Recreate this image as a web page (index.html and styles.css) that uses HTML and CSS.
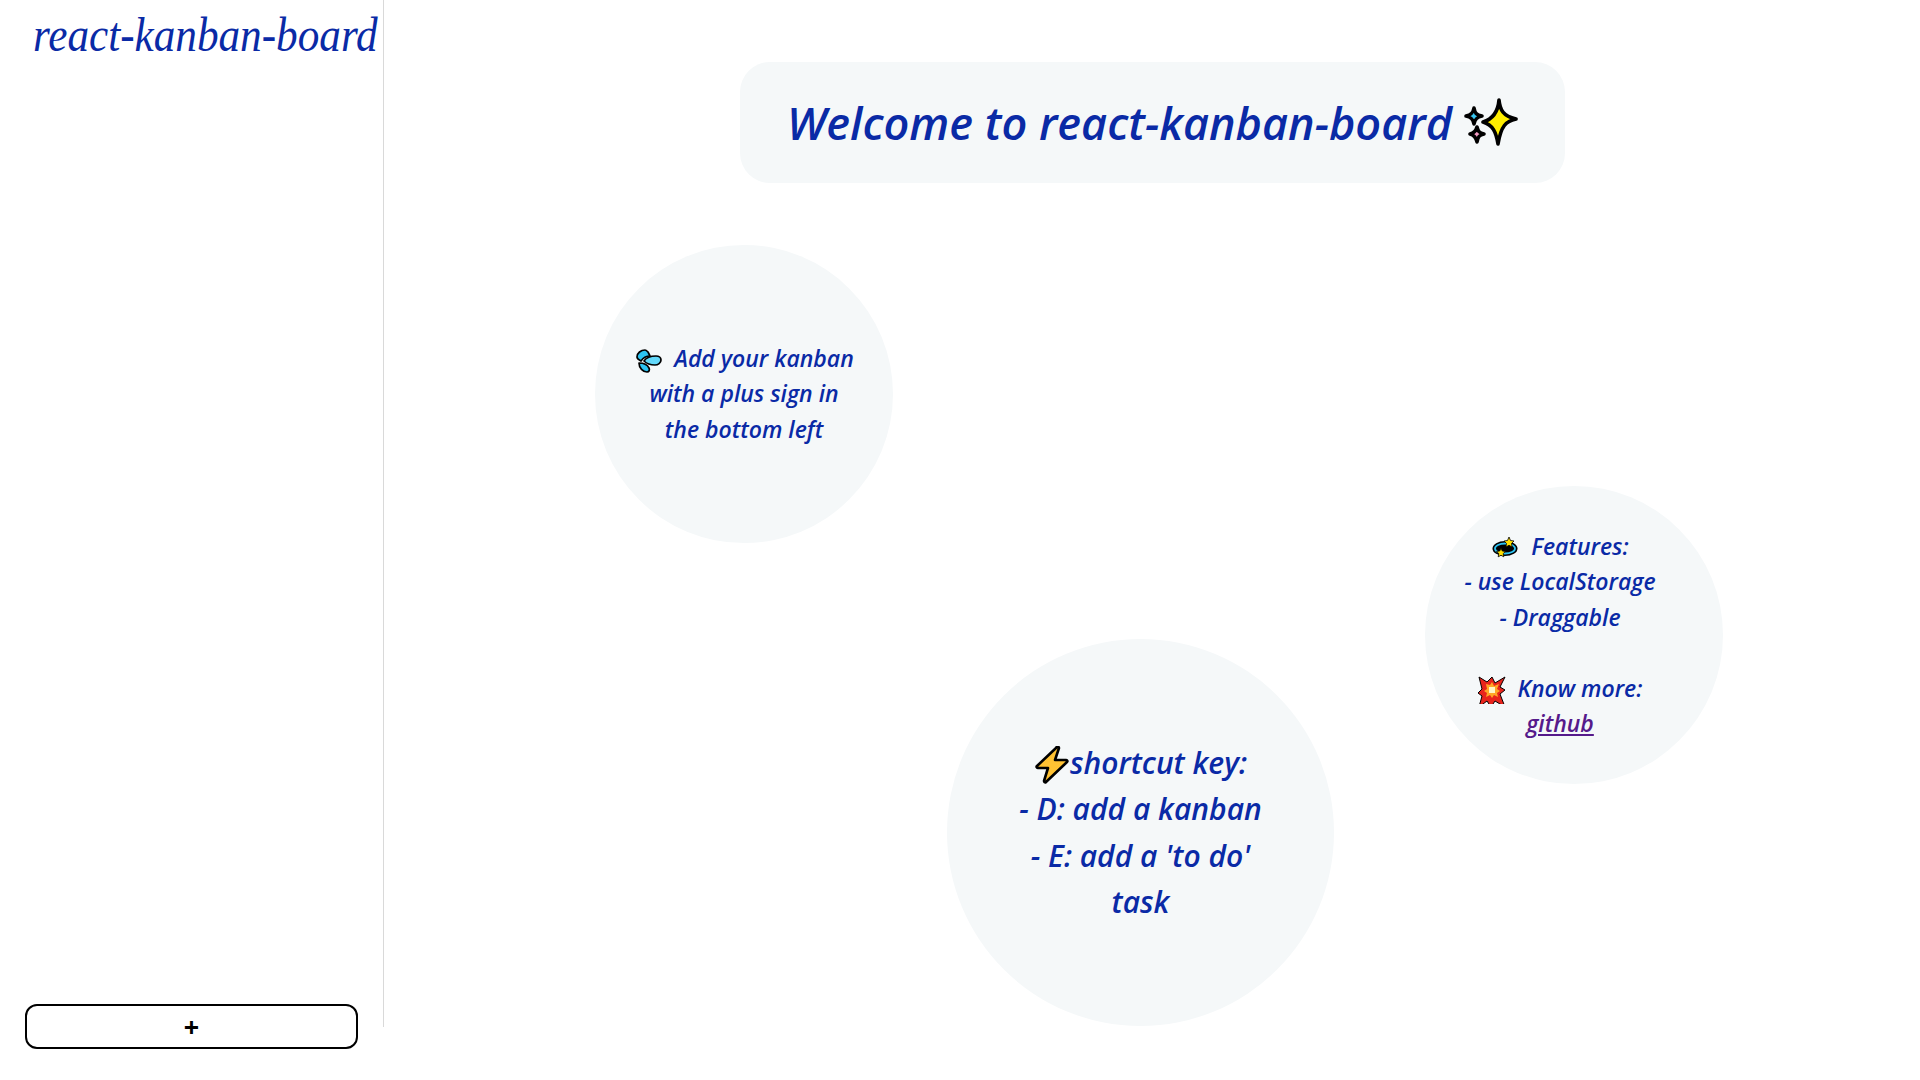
FILE: index.html
```html
<!DOCTYPE html>
<html lang="en">
<head>
  <meta charset="UTF-8">
  <meta name="viewport" content="width=device-width, initial-scale=1.0">
  <title>react-kanban-board</title>
  <link rel="stylesheet" href="styles.css">
</head>
<body>
  <div class="app">
    <aside class="sidebar">
      <h1 class="logo"><span class="logo-text">react-kanban-board</span></h1>
      <button class="add-btn" type="button">+</button>
    </aside>

    <main class="board">
      <h2 class="welcome">Welcome to react-kanban-board
        <svg class="icon icon-sparkles" viewBox="0 0 56 56">
          <path d="M37 5c1 10 4 16 17 19-10 2-15 7-18 25-2-12-5-19-15-22 10-3 15-10 16-22z" fill="#ffee00" stroke="#000" stroke-width="3.6" stroke-linejoin="round"/>
          <path d="M12 13c1 5 2 7 8 8-5 1-7 3-8 8-1-5-3-7-8-8 5-1 7-3 8-8z" fill="#38c6f0" stroke="#000" stroke-width="3.6" stroke-linejoin="round"/>
          <path d="M15 32c1 4 2 6 7 7-5 1-6 3-7 8-1-5-3-7-7-8 4-1 6-3 7-7z" fill="#f29ac2" stroke="#000" stroke-width="3.6" stroke-linejoin="round"/>
        </svg>
      </h2>

      <div class="bubble bubble-add">
        <p>
          <svg class="icon icon-dash" viewBox="0 0 28 26">
            <path d="M3 9c0-4 4-7 8-7 1 0 2 1 3 2l2 4c-4 0-7 2-9 5-2-1-4-2-4-4z" fill="#2cc3f2" stroke="#000" stroke-width="1.7" stroke-linejoin="round"/>
            <path d="M10 13c2-3 7-5 12-5 3 0 5 2 5 4 0 3-3 5-6 5-4 0-8-1-11-4z" fill="#62d8fa" stroke="#000" stroke-width="1.7" stroke-linejoin="round"/>
            <path d="M5 15c4 0 8 1 10 5 1 2 0 4-2 4-4 0-8-4-8-9z" fill="#2cc3f2" stroke="#000" stroke-width="1.7" stroke-linejoin="round"/>
          </svg>
          &nbsp;Add your kanban<br>with a plus sign in<br>the bottom left
        </p>
      </div>

      <div class="bubble bubble-features">
        <p>
          <svg class="icon icon-dizzy" viewBox="0 0 28 24">
            <ellipse cx="14" cy="12.5" rx="12.5" ry="7.5" fill="#000"/>
            <ellipse cx="14" cy="12.5" rx="10" ry="5" fill="none" stroke="#2cc3f2" stroke-width="1.8"/>
            <path d="M18 1l1.5 3.5 3.5.5-2.5 2.5.6 3.5-3.1-1.7-3.1 1.7.6-3.5L13 5l3.500-.5z" fill="#ffe000" stroke="#000" stroke-width=".8"/>
            <path d="M10 12l1.300 3 3.200.4-2.300 2.200.6 3.200-2.800-1.500-2.800 1.500.6-3.200-2.300-2.200 3.200-.4z" fill="#ffe000" stroke="#000" stroke-width=".8"/>
          </svg>
          &nbsp;Features:<br>- use LocalStorage<br>- Draggable<br><br>
          <svg class="icon icon-boom" viewBox="0 0 28 28">
            <path d="M1 1l8 5 5-5 3 6 10-6-5 10 5 3-5 4 5 13-10-6-4 6-4-6-8 6 3-11-4-3 4-4z" fill="#e8241c" stroke="#000" stroke-width="1"/>
            <path d="M8 8l4 1 2-3 2 4 5-2-2 5 3 2-3 2 1 4-4-2-2 3-2-3-4 2 1-4-3-2 3-2z" fill="#ffa726"/>
            <rect x="11" y="11" width="6" height="6" fill="#fff6c8"/>
          </svg>
          &nbsp;Know more:<br><a class="link" href="#">github</a>
        </p>
      </div>

      <div class="bubble bubble-shortcut">
        <p>
          <svg class="icon icon-zap" viewBox="0 0 36 38">
            <path d="M22 2L3 20c-1 1 0 2 1 2h10l-4 13c0 1 1 2 2 1l21-20c1-1 0-2-1-2H21l4-12c0-1-2-2-3-0z" fill="#ffc233" stroke="#000" stroke-width="2.600" stroke-linejoin="round"/>
          </svg>shortcut key:<br>- D: add a kanban<br>- E: add a 'to do'<br>task
        </p>
      </div>
    </main>
  </div>
</body>
</html>
```

FILE: styles.css
```css
* {
  box-sizing: border-box;
}
body {
  margin: 0;
  background-color: #fff;
  font-family: "Open Sans", "Noto Sans", sans-serif;
  color: #0a2aa6;
}
.app {
  display: flex;
  height: 100vh;
  overflow: hidden;
}
/* Barra lateral */
.sidebar {
  position: relative;
  width: 384px;
  height: 1027px;
  border-right: 1px solid #d9d9d9;
  flex-shrink: 0;
}
.logo {
  margin: 0;
  padding: 7px 0 0 33px;
  font-family: "Liberation Serif", serif;
  font-style: italic;
  font-weight: 400;
  font-size: 48px;
  line-height: 56px;
  white-space: nowrap;
}
.logo-text {
  display: inline-block;
  transform: scaleX(0.9);
  transform-origin: left center;
}
.add-btn {
  position: absolute;
  left: 25px;
  top: 1004px;
  width: 333px;
  height: 45px;
  background: #fff;
  border: 2px solid #000;
  border-radius: 12px;
  color: #000;
  font-family: "Open Sans", sans-serif;
  font-size: 27px;
  font-weight: 700;
  line-height: 1;
  padding: 0;
}
/* Tablero */
.board {
  position: relative;
  flex: 1;
  padding: 62px 0 0 356px;
}
.welcome {
  display: flex;
  align-items: center;
  justify-content: center;
  gap: 10px;
  width: 825px;
  height: 121px;
  margin: 0;
  background-color: #f5f8f9;
  border-radius: 30px;
  font-size: 45px;
  font-style: italic;
  font-weight: 600;
  white-space: nowrap;
}
.bubble {
  position: absolute;
  display: flex;
  align-items: center;
  justify-content: center;
  border-radius: 50%;
  background-color: #f5f8f9;
  font-style: italic;
  font-weight: 600;
  text-align: center;
  white-space: nowrap;
}
.bubble p {
  margin: 0;
}
.bubble-add {
  left: 211px;
  top: 245px;
  width: 298px;
  height: 298px;
  font-size: 23px;
  line-height: 35.5px;
}
.bubble-features {
  left: 1041px;
  top: 486px;
  width: 298px;
  height: 298px;
  padding-right: 28px;
  font-size: 23px;
  line-height: 35.5px;
}
.bubble-shortcut {
  left: 563px;
  top: 639px;
  width: 387px;
  height: 387px;
  font-size: 30px;
  line-height: 46.5px;
}
.link {
  color: #551a8b;
  text-decoration: underline;
}
/* Iconos */
.icon {
  vertical-align: middle;
}
.icon-sparkles {
  width: 56px;
  height: 56px;
  flex-shrink: 0;
}
.icon-dash {
  width: 28px;
  height: 26px;
}
.icon-dizzy {
  width: 28px;
  height: 24px;
}
.icon-boom {
  width: 28px;
  height: 28px;
}
.icon-zap {
  width: 36px;
  height: 38px;
}
```
